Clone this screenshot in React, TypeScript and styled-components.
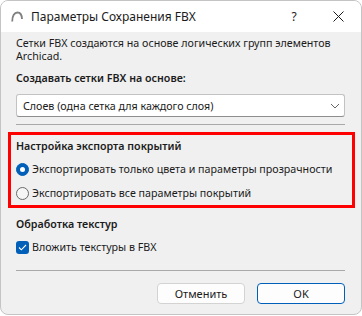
import React from "react";
import styled, { createGlobalStyle } from "styled-components";

const GlobalStyle = createGlobalStyle`
  html, body { margin: 0; padding: 0; background: #ffffff; }
  body { font-family: "Noto Sans", "Open Sans", sans-serif; font-size: 10.7px; color: #1b1b1b; }
  * { box-sizing: border-box; }
`;

const Window = styled.div`
  width: 362px;
  height: 315px;
  border: 1px solid #c4c4c4;
  border-radius: 8px;
  overflow: hidden;
  background: #f0f0f0;
  display: flex;
  flex-direction: column;
`;

const TitleBar = styled.div`
  height: 31px;
  background: #ffffff;
  display: flex;
  align-items: center;
  padding-left: 10px;
  flex-shrink: 0;
`;

const TitleText = styled.span`
  margin-left: 8px;
  font-size: 12px;
  color: #1b1b1b;
  flex: 1;
`;

const TitleButton = styled.span<{ $width: number; $gap?: number }>`
  width: ${(p) => p.$width}px;
  margin-right: ${(p) => p.$gap ?? 0}px;
  font-size: 12px;
  color: #1b1b1b;
  display: flex;
  justify-content: center;
  align-items: center;
`;

const Body = styled.div`
  padding: 5px 16px 0 15px;
  display: flex;
  flex-direction: column;
`;

const Text = styled.div`
  line-height: 13px;
`;

const Heading = styled.div<{ $top?: number }>`
  font-weight: 600;
  line-height: 13px;
  margin-top: ${(p) => p.$top ?? 0}px;
`;

const Select = styled.div`
  margin-top: 9px;
  height: 23px;
  background: #ffffff;
  border: 1px solid #c2c2c2;
  border-bottom-color: #8e8e8e;
  border-radius: 3px;
  display: flex;
  align-items: center;
  padding: 0 4px 0 6px;
  justify-content: space-between;
`;

const Divider = styled.div<{ $top: number }>`
  height: 1px;
  background: #a9a9a9;
  margin-top: ${(p) => p.$top}px;
`;

const Highlight = styled.div`
  margin: 7px -10px 0 -8px;
  border: 3px solid #ff0000;
  padding: 5px 5px 0 5px;
  display: flex;
  flex-direction: column;
`;

const OptionRow = styled.div<{ $top?: number }>`
  display: flex;
  align-items: center;
  height: 24px;
  gap: 3px;
  margin-top: ${(p) => p.$top ?? 0}px;
`;

const RadioCircle = styled.span<{ $checked?: boolean }>`
  width: 13px;
  height: 13px;
  border-radius: 50%;
  flex-shrink: 0;
  display: flex;
  align-items: center;
  justify-content: center;
  background: ${(p) => (p.$checked ? "#005fb8" : "#f6f6f6")};
  border: 1px solid ${(p) => (p.$checked ? "#005fb8" : "#6a6a6a")};
  &::after {
    content: "";
    display: ${(p) => (p.$checked ? "block" : "none")};
    width: 5px;
    height: 5px;
    border-radius: 50%;
    background: #ffffff;
  }
`;

const CheckBox = styled.span`
  width: 13px;
  height: 13px;
  border-radius: 3px;
  background: #005fb8;
  flex-shrink: 0;
  display: flex;
  align-items: center;
  justify-content: center;
`;

const Footer = styled.div`
  display: flex;
  justify-content: flex-end;
  gap: 12px;
  margin-top: 12px;
`;

const Button = styled.button<{ $primary?: boolean }>`
  width: 88px;
  height: 21px;
  border-radius: 4px;
  background: #fdfdfd;
  border: 1px solid ${(p) => (p.$primary ? "#005fb8" : "#d3d3d3")};
  font-family: inherit;
  font-size: 11px;
  color: #1b1b1b;
  padding: 0;
`;

export default function App() {
  return (
    <>
      <GlobalStyle />
      <Window>
        <TitleBar>
          <svg width="12" height="11" viewBox="0 0 12 11">
            <path d="M1.2 10.5 C1.2 4.5 3.5 1.5 6.5 1.5 C9 1.5 10.8 3.5 11 8" fill="none" stroke="#808080" strokeWidth="1.8" />
          </svg>
          <TitleText>Параметры Сохранения FBX</TitleText>
          <TitleButton $width={14} $gap={14}>?</TitleButton>
          <TitleButton $width={46}>
            <svg width="11" height="11" viewBox="0 0 11 11">
              <path d="M0.5 0.5 L10.5 10.5 M10.5 0.5 L0.5 10.5" stroke="#1b1b1b" strokeWidth="1" />
            </svg>
          </TitleButton>
        </TitleBar>
        <Body>
          <Text>
            Сетки FBX создаются на основе логических групп элементов
            <br />
            Archicad.
          </Text>
          <Heading $top={9}>Создавать сетки FBX на основе:</Heading>
          <Select>
            <span>Слоев (одна сетка для каждого слоя)</span>
            <svg width="10" height="6" viewBox="0 0 10 6">
              <path d="M1 1 L5 5 L9 1" fill="none" stroke="#666" strokeWidth="1" />
            </svg>
          </Select>
          <Divider $top={7} />
          <Highlight>
            <Heading>Настройка экспорта покрытий</Heading>
            <OptionRow $top={4}>
              <RadioCircle $checked />
              <span>Экспортировать только цвета и параметры прозрачности</span>
            </OptionRow>
            <OptionRow>
              <RadioCircle />
              <span>Экспортировать все параметры покрытий</span>
            </OptionRow>
          </Highlight>
          <Heading $top={10}>Обработка текстур</Heading>
          <OptionRow $top={4}>
            <CheckBox>
              <svg width="9" height="7" viewBox="0 0 9 7">
                <path d="M1 3.5 L3.3 5.8 L8 1" fill="none" stroke="#fff" strokeWidth="1.1" />
              </svg>
            </CheckBox>
            <span>Вложить текстуры в FBX</span>
          </OptionRow>
          <Divider $top={11} />
          <Footer>
            <Button>Отменить</Button>
            <Button $primary>OK</Button>
          </Footer>
        </Body>
      </Window>
    </>
  );
}
